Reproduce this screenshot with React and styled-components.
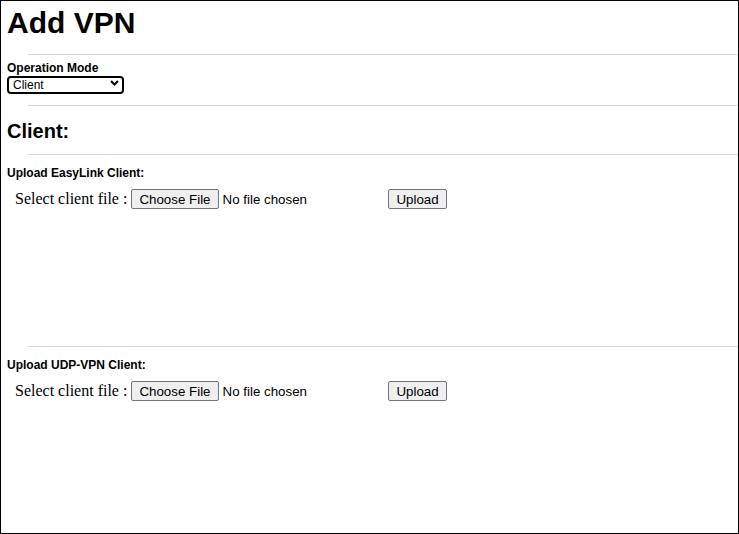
import React from "react"
import styled, { createGlobalStyle } from "styled-components"

const GlobalStyle = createGlobalStyle`
  html, body {
    margin: 0;
    padding: 0;
    background: #fff;
  }
  body {
    font-family: "Liberation Sans", Arial, sans-serif;
  }
`

const Page = styled.div`
  box-sizing: border-box;
  width: 739px;
  height: 534px;
  border: 1px solid #000;
  overflow: hidden;
`

const Title = styled.h1`
  margin: 5px 0 0 6px;
  font-size: 30px;
  line-height: 34px;
  font-weight: bold;
  color: #000;
`

const Rule = styled.hr`
  margin: ${(p) => p.$top || 0}px 0 0 27px;
  border: none;
  border-top: 1px solid #d9d9d9;
  height: 0;
`

const Field = styled.div`
  display: flex;
  flex-direction: column;
  align-items: flex-start;
  padding: 6px 0 0 6px;
`

const FieldLabel = styled.label`
  font-size: 12px;
  line-height: 14px;
  font-weight: bold;
`

const SelectWrap = styled.div`
  position: relative;
  width: 117px;
  height: 18px;
`

const Select = styled.select`
  appearance: none;
  box-sizing: border-box;
  width: 100%;
  height: 100%;
  margin: 0;
  padding: 0 18px 0 4px;
  border: 2px solid #000;
  border-radius: 4px;
  background: #fff;
  font-family: "Liberation Sans", Arial, sans-serif;
  font-size: 12px;
  color: #000;
  outline: none;
`

const Chevron = styled.svg`
  position: absolute;
  right: 5px;
  top: 5px;
  pointer-events: none;
`

const SectionTitle = styled.h2`
  margin: 14px 0 11px 6px;
  font-size: 20px;
  line-height: 23px;
  font-weight: bold;
`

const Block = styled.section`
  box-sizing: border-box;
  height: ${(p) => p.$height}px;
  padding-top: 11px;
`

const BlockTitle = styled.h4`
  margin: 0 0 0 6px;
  font-size: 12px;
  line-height: 14px;
  font-weight: bold;
`

const UploadRow = styled.div`
  display: flex;
  align-items: center;
  gap: 4px;
  margin: 9px 0 0 14px;
`

const RowLabel = styled.span`
  font-family: "Liberation Serif", "Times New Roman", serif;
  font-size: 16px;
`

const FileInput = styled.input`
  width: 253px;
  margin: 0;
  font-family: "Liberation Sans", Arial, sans-serif;
  font-size: 13.33px;
  color: #000;

  &::file-selector-button {
    font-family: "Liberation Sans", Arial, sans-serif;
    font-size: 13.33px;
    margin: 0 4px 0 0;
    padding: 1px 7px;
    height: 20px;
    background: #efefef;
    border: 1px solid #767676;
    border-radius: 2px;
    color: #000;
  }
`

const Button = styled.button`
  box-sizing: border-box;
  height: 20px;
  margin: 0;
  padding: 1px 7px;
  font-family: "Liberation Sans", Arial, sans-serif;
  font-size: 13.33px;
  background: #efefef;
  border: 1px solid #767676;
  border-radius: 2px;
  color: #000;
`

const UploadBlock = ({ title, height }) => (
  <Block $height={height}>
    <BlockTitle>{title}</BlockTitle>
    <UploadRow>
      <RowLabel>Select client file :</RowLabel>
      <FileInput type="file" />
      <Button type="button">Upload</Button>
    </UploadRow>
  </Block>
)

export default function App() {
  return (
    <>
      <GlobalStyle />
      <Page>
        <Title>Add VPN</Title>
        <Rule $top={14} />
        <Field>
          <FieldLabel htmlFor="mode">Operation Mode</FieldLabel>
          <SelectWrap>
            <Select id="mode" defaultValue="client">
              <option value="client">Client</option>
              <option value="server">Server</option>
            </Select>
            <Chevron width="9" height="6" viewBox="0 0 9 6">
              <path d="M1 1 L4.5 4.5 L8 1" fill="none" stroke="#000" strokeWidth="2" />
            </Chevron>
          </SelectWrap>
        </Field>
        <Rule $top={12} />
        <SectionTitle>Client:</SectionTitle>
        <Rule />
        <UploadBlock title="Upload EasyLink Client:" height={191} />
        <Rule />
        <UploadBlock title="Upload UDP-VPN Client:" height={120} />
      </Page>
    </>
  )
}
